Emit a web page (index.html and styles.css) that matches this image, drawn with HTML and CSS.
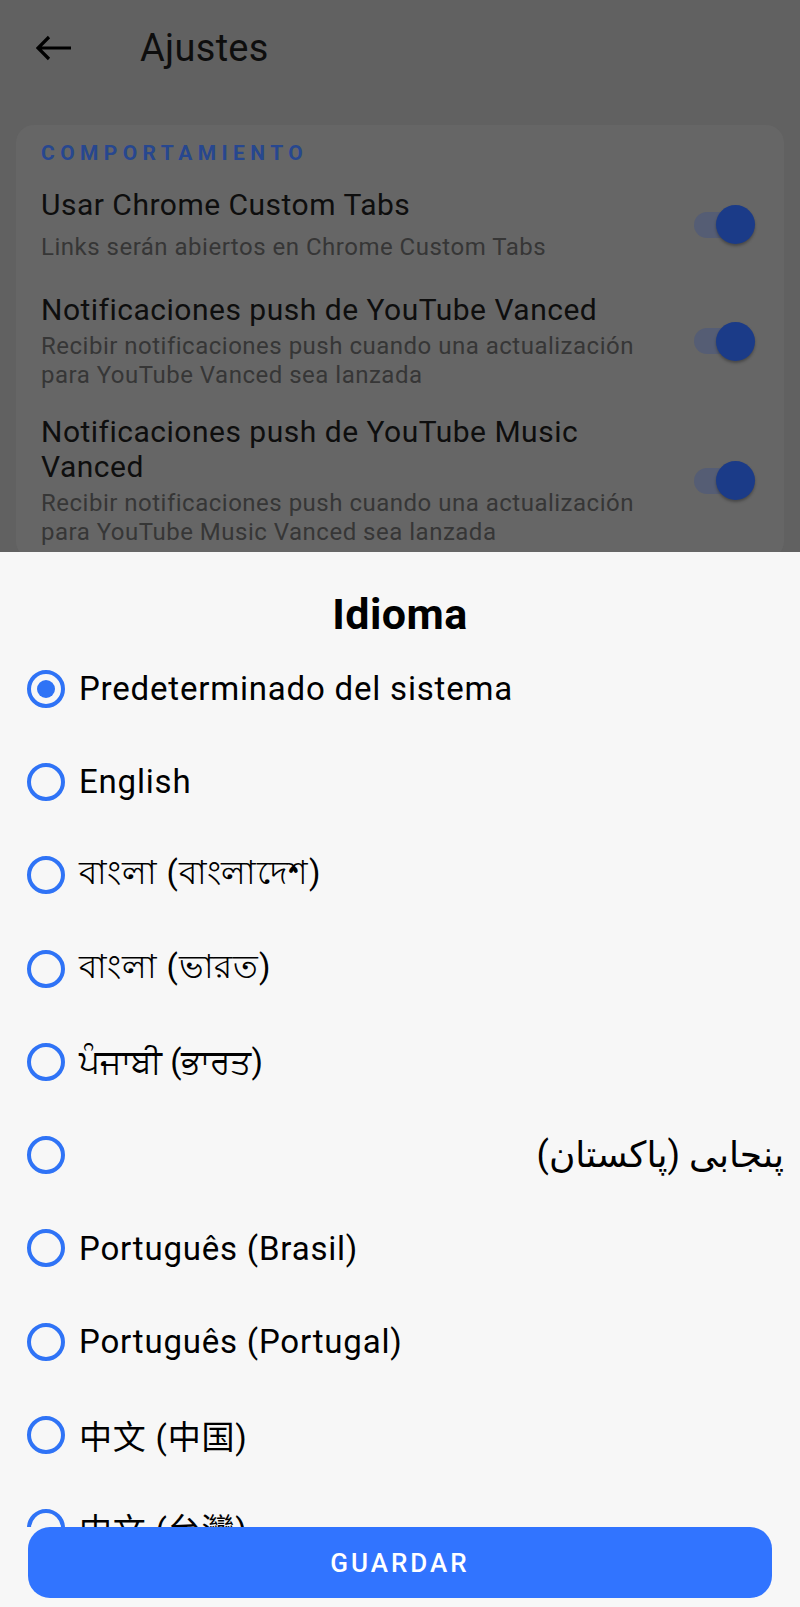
FILE: index.html
```html
<!DOCTYPE html>
<html lang="es">
<head>
    <meta charset="UTF-8">
    <meta name="viewport" content="width=device-width, initial-scale=1.0">
    <title>Ajustes</title>
    <link rel="stylesheet" href="styles.css">
</head>
<body>
    <div class="settings">
        <header class="appbar">
            <svg class="back" width="36" height="26" viewBox="0 0 36 26">
                <path d="M35 13H3M13 2L2 13l11 11" fill="none" stroke="#000" stroke-width="3.2"/>
            </svg>
            <h1>Ajustes</h1>
        </header>

        <section class="card">
            <h2 class="card-title">COMPORTAMIENTO</h2>

            <div class="pref first">
                <div class="pref-text">
                    <div class="pref-title">Usar Chrome Custom Tabs</div>
                    <div class="pref-sub">Links serán abiertos en Chrome Custom Tabs</div>
                </div>
                <span class="switch"><span class="thumb"></span></span>
            </div>

            <div class="pref">
                <div class="pref-text">
                    <div class="pref-title">Notificaciones push de YouTube Vanced</div>
                    <div class="pref-sub">Recibir notificaciones push cuando una actualización para YouTube Vanced sea lanzada</div>
                </div>
                <span class="switch"><span class="thumb"></span></span>
            </div>

            <div class="pref">
                <div class="pref-text">
                    <div class="pref-title">Notificaciones push de YouTube Music Vanced</div>
                    <div class="pref-sub">Recibir notificaciones push cuando una actualización para YouTube Music Vanced sea lanzada</div>
                </div>
                <span class="switch"><span class="thumb"></span></span>
            </div>
        </section>
    </div>

    <div class="sheet">
        <h2 class="sheet-title">Idioma</h2>

        <ul class="langs">
            <li class="lang"><span class="radio checked"></span><span>Predeterminado del sistema</span></li>
            <li class="lang"><span class="radio"></span><span>English</span></li>
            <li class="lang"><span class="radio"></span><span>বাংলা (বাংলাদেশ)</span></li>
            <li class="lang"><span class="radio"></span><span>বাংলা (ভারত)</span></li>
            <li class="lang"><span class="radio"></span><span class="gu">ਪੰਜਾਬੀ (ਭਾਰਤ)</span></li>
            <li class="lang"><span class="radio"></span><span class="rtl" dir="rtl">پنجابی (پاکستان)</span></li>
            <li class="lang"><span class="radio"></span><span>Português (Brasil)</span></li>
            <li class="lang"><span class="radio"></span><span>Português (Portugal)</span></li>
            <li class="lang"><span class="radio"></span><span>中文 (中国)</span></li>
            <li class="lang"><span class="radio"></span><span>中文 (台灣)</span></li>
        </ul>

        <button class="save">GUARDAR</button>
    </div>
</body>
</html>
```

FILE: styles.css
```css
body {
    margin: 0;
    padding: 0;
    font-family: Roboto, "Noto Sans", "DejaVu Sans", "Noto Sans CJK SC", sans-serif;
    background-color: #616161;
    height: 1607px;
    display: flex;
    flex-direction: column;
    overflow: hidden;
}

/* pantalla de ajustes (atenuada detrás del diálogo) */
.settings {
    height: 552px;
    overflow: hidden;
    flex-shrink: 0;
}

.appbar {
    height: 96px;
    display: flex;
    align-items: center;
    padding-left: 36px;
}

.back {
    display: block;
}

.appbar h1 {
    margin: 0 0 0 68px;
    font-size: 38px;
    font-weight: 400;
    letter-spacing: 0.3px;
    color: #0e0e0e;
}

.card {
    margin: 29px 16px 0 16px;
    background-color: #666666;
    border-radius: 18px;
    padding: 16px 30px 0 25px;
}

.card-title {
    margin: 0;
    font-size: 21px;
    line-height: 24px;
    font-weight: 700;
    letter-spacing: 5.4px;
    color: #27478f;
}

.pref {
    display: flex;
    align-items: center;
    padding: 12px 0;
}

.pref.first {
    padding: 22px 0 18px 0;
}

.pref-text {
    flex: 1;
    max-width: 620px;
}

.pref-title {
    font-size: 30px;
    line-height: 35px;
    letter-spacing: 0.5px;
    color: #0e0e0e;
}

.pref-sub {
    margin-top: 5px;
    font-size: 24px;
    line-height: 29px;
    letter-spacing: 0.5px;
    color: #363636;
}

.pref.first .pref-sub {
    margin-top: 11px;
}

.switch {
    position: relative;
    margin-left: auto;
    width: 60px;
    height: 26px;
    border-radius: 13px;
    background-color: #555d74;
    flex-shrink: 0;
}

.switch .thumb {
    position: absolute;
    right: -1px;
    top: -6.5px;
    width: 39px;
    height: 39px;
    border-radius: 50%;
    background-color: #1b3b88;
    box-shadow: 0 2px 3px rgba(0, 0, 0, 0.3);
}

/* hoja inferior: idioma */
.sheet {
    flex: 1;
    background-color: #f7f7f7;
    display: flex;
    flex-direction: column;
    min-height: 0;
}

.sheet-title {
    margin: 0;
    padding-top: 37px;
    padding-bottom: 3px;
    line-height: 50px;
    text-align: center;
    font-size: 43px;
    font-weight: 700;
    letter-spacing: 0.5px;
    color: #000;
}

.langs {
    list-style: none;
    margin: 0;
    padding: 0;
    flex: 1;
    min-height: 0;
    overflow: hidden;
}

.lang {
    height: 93.3px;
    display: flex;
    align-items: center;
    padding: 0 16px 0 27px;
    font-size: 33px;
    letter-spacing: 0.8px;
    color: #000;
}

.radio {
    width: 38px;
    height: 38px;
    box-sizing: border-box;
    border: 4px solid #2f73f6;
    border-radius: 50%;
    flex-shrink: 0;
    margin-right: 14px;
    display: flex;
    align-items: center;
    justify-content: center;
}

.radio.checked::after {
    content: "";
    width: 18px;
    height: 18px;
    border-radius: 50%;
    background-color: #2f73f6;
}

.gu {
    letter-spacing: 0;
}

.rtl {
    flex: 1;
    text-align: right;
    font-size: 36px;
    letter-spacing: 0;
}

.save {
    flex-shrink: 0;
    margin: 0 28px 9px 28px;
    height: 71px;
    border: none;
    border-radius: 22px;
    background-color: #3174ff;
    color: #fff;
    font-family: Roboto, sans-serif;
    font-size: 26px;
    font-weight: 500;
    letter-spacing: 3px;
}
```
